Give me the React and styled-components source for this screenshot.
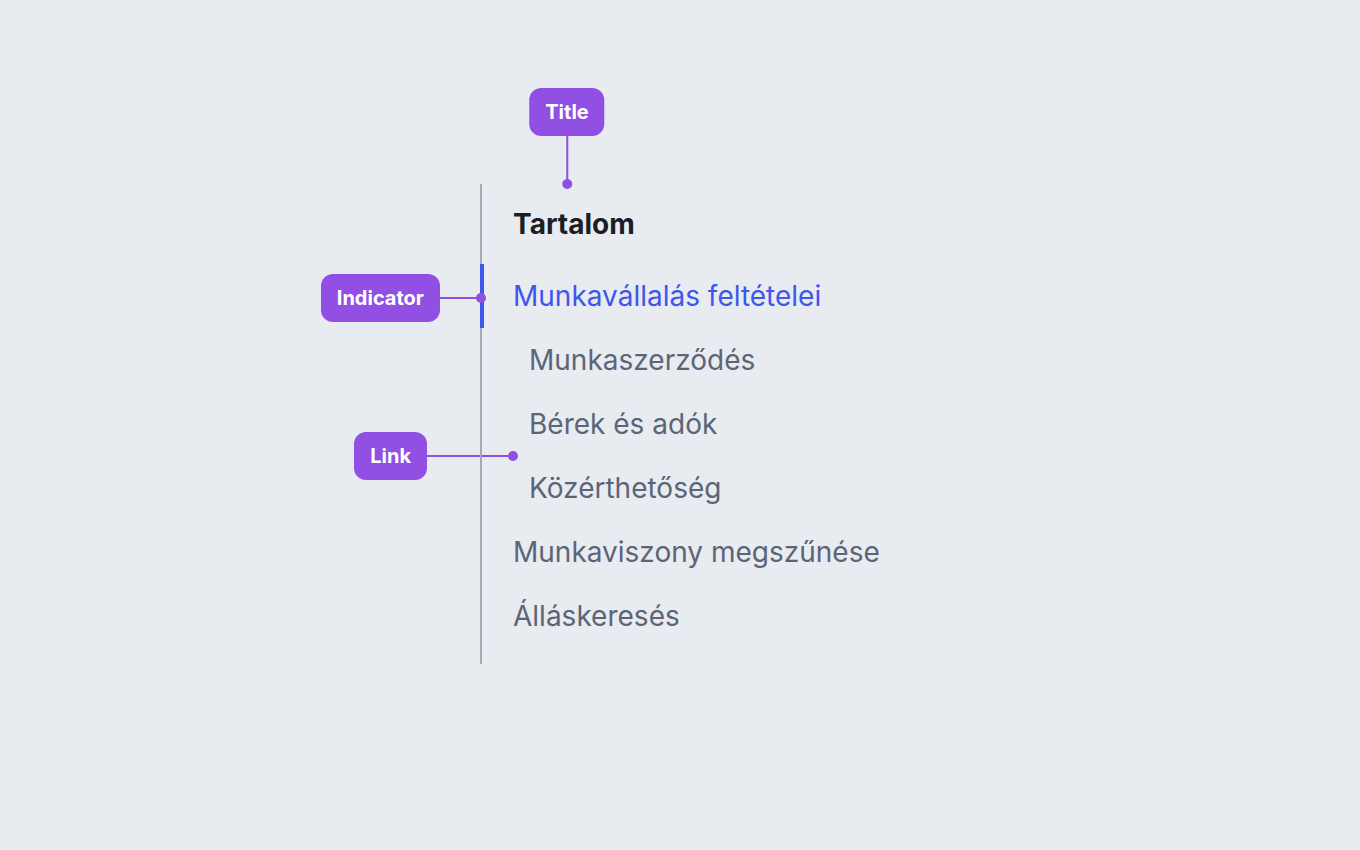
import React from "react";
import styled, { createGlobalStyle } from "styled-components";

const GlobalStyle = createGlobalStyle`
	html, body {
		margin: 0;
		padding: 0;
		background: #e8ebf0;
		font-family: Inter, "Noto Sans", sans-serif;
	}
`;

const ACCENT = "#914fe4";

const Stage = styled.div`
	position: relative;
	width: 1360px;
	height: 850px;
	box-sizing: border-box;
	padding: 184px 0 0 480px;
`;

const Nav = styled.nav`
	position: relative;
	z-index: 1;
	width: 460px;
	border-left: 2px solid #a3abb9;
	padding-bottom: 16px;
`;

const Title = styled.h2`
	margin: 0;
	height: 80px;
	display: flex;
	align-items: center;
	padding-left: 31px;
	font-size: 28px;
	font-weight: 700;
	color: #1b1e25;
`;

const List = styled.ul`
	margin: 0;
	padding: 0;
	list-style: none;
`;

const Item = styled.li`
	position: relative;
	height: 64px;
	display: flex;
	align-items: center;
	padding-left: ${(p) => (p.$nested ? 47 : 31)}px;
	font-size: 28px;
	font-weight: 400;
	white-space: nowrap;
	color: ${(p) => (p.$active ? "#3f55ee" : "#5b6577")};

	&::before {
		content: "";
		display: ${(p) => (p.$active ? "block" : "none")};
		position: absolute;
		left: -2px;
		top: 0;
		width: 4px;
		height: 64px;
		background: #3f55ee;
	}
`;

const Callout = styled.div`
	position: absolute;
	display: flex;
	align-items: center;
	z-index: ${(p) => p.$z};
	flex-direction: ${(p) => (p.$vertical ? "column" : "row")};
`;

const Badge = styled.div`
	height: 48px;
	box-sizing: border-box;
	padding: 0 16px;
	display: flex;
	align-items: center;
	border-radius: 12px;
	background: ${ACCENT};
	color: #fff;
	font-size: 20px;
	font-weight: 700;
	white-space: nowrap;
`;

const Connector = styled.div`
	background: ${ACCENT};
	width: ${(p) => (p.$vertical ? 2 : p.$length)}px;
	height: ${(p) => (p.$vertical ? p.$length : 2)}px;
`;

const Dot = styled.div`
	width: 10px;
	height: 10px;
	border-radius: 50%;
	background: ${ACCENT};
	margin: ${(p) => (p.$vertical ? "-5px 0 0 0" : "0 0 0 -5px")};
`;

const items = [
	{ label: "Munkavállalás feltételei", active: true },
	{ label: "Munkaszerződés", nested: true },
	{ label: "Bérek és adók", nested: true },
	{ label: "Közérthetőség", nested: true },
	{ label: "Munkaviszony megszűnése" },
	{ label: "Álláskeresés" },
];

const App = () => {
	return (
		<>
			<GlobalStyle />
			<Stage>
				<Nav>
					<Title>Tartalom</Title>
					<List>
						{items.map((item) => (
							<Item key={item.label} $active={item.active} $nested={item.nested}>
								{item.label}
							</Item>
						))}
					</List>
				</Nav>

				<Callout $vertical $z={2} style={{ left: 567, top: 88, transform: "translateX(-50%)" }}>
					<Badge>Title</Badge>
					<Connector $vertical $length={48} />
					<Dot $vertical />
				</Callout>

				<Callout $z={2} style={{ right: 1360 - 486, top: 274 }}>
					<Badge>Indicator</Badge>
					<Connector $length={41} />
					<Dot />
				</Callout>

				<Callout $z={0} style={{ right: 1360 - 518, top: 432 }}>
					<Badge>Link</Badge>
					<Connector $length={86} />
					<Dot />
				</Callout>
			</Stage>
		</>
	);
};

export default App;
